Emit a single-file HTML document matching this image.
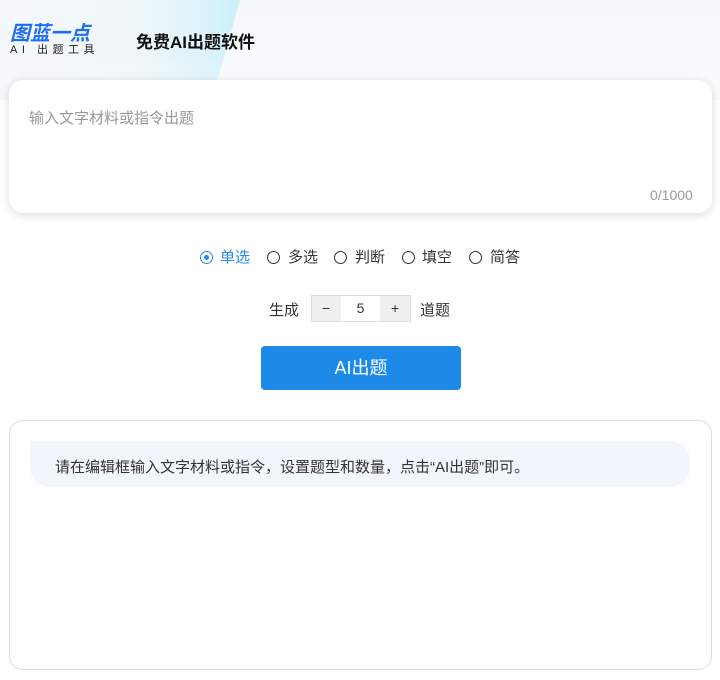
<!DOCTYPE html>
<html><head><meta charset="utf-8"><style>
body{margin:0;width:720px;height:680px;overflow:hidden;background:#fff;font-family:"Liberation Sans","Noto Sans CJK SC",sans-serif;position:relative}
.hdr{position:absolute;left:0;top:0;width:720px;height:100px;background:linear-gradient(180deg,#f6f9fc 0%,#f9fbfd 100%)}
.left{position:absolute;left:0;top:0;width:720px;height:100px;background:linear-gradient(90deg,#f5f8fb 0%,#eff6fa 140px,#dcf3fa 205px,#ccf0f9 238px);clip-path:polygon(0 0,240px 0,212px 100px,0 100px)}
.fade{position:absolute;left:0;top:55px;width:720px;height:45px;background:linear-gradient(180deg,rgba(248,250,252,0),rgba(248,250,252,0.6))}
.abs{position:absolute}
.r{position:absolute;top:251px;width:11px;height:11px;border:1.5px solid #333;border-radius:50%}
.t{position:absolute;top:246px;font-size:15px;color:#333}
</style></head><body>
<div class="hdr"></div><div class="left"></div><div class="fade"></div>
<div class="abs" style="left:10px;top:17px;font-size:20px;font-weight:bold;font-style:italic;color:#1e6ff0">图蓝一点</div>
<div class="abs" style="left:10px;top:41px;font-size:11px;color:#222;letter-spacing:4.5px;white-space:nowrap">AI 出题工具</div>
<div class="abs" style="left:136px;top:28px;font-size:17px;font-weight:bold;color:#111">免费AI出题软件</div>
<div class="abs" style="left:9px;top:80px;width:703px;height:133px;background:#fff;border-radius:14px;box-shadow:0 2px 10px rgba(0,0,0,0.15)"></div>
<div class="abs" style="left:29px;top:107px;font-size:15px;color:#999">输入文字材料或指令出题</div>
<div class="abs" style="left:650px;top:187px;font-size:14px;color:#999">0/1000</div>
<div class="r" style="left:200px;border-color:#2a8ae6"><span style="position:absolute;left:3px;top:3px;width:5px;height:5px;background:#2a8ae6;border-radius:50%"></span></div>
<div class="t" style="left:220px;color:#2a8ae6">单选</div>
<div class="r" style="left:267px"></div><div class="t" style="left:288px">多选</div>
<div class="r" style="left:334px"></div><div class="t" style="left:355px">判断</div>
<div class="r" style="left:402px"></div><div class="t" style="left:422px">填空</div>
<div class="r" style="left:469px"></div><div class="t" style="left:490px">简答</div>
<div class="abs" style="left:269px;top:299px;font-size:15px;color:#333">生成</div>
<div class="abs" style="left:311px;top:295px;width:98px;height:25px;border:1px solid #ddd;background:#f0f0f0;font-size:14px;color:#333">
<span class="abs" style="left:10px;top:4px">−</span>
<span class="abs" style="left:29px;top:0;width:39px;height:25px;background:#fff;text-align:center;line-height:25px">5</span>
<span class="abs" style="left:79px;top:4px">+</span></div>
<div class="abs" style="left:420px;top:299px;font-size:15px;color:#333">道题</div>
<div class="abs" style="left:261px;top:346px;width:200px;height:44px;background:#1e8ae8;border-radius:4px;color:#fff;font-size:18px;text-align:center;line-height:44px">AI出题</div>
<div class="abs" style="left:9px;top:420px;width:701px;height:248px;border:1px solid #ddd;border-radius:14px"></div>
<div class="abs" style="left:30px;top:441px;width:660px;height:46px;background:#f1f5fc;border-radius:0 20px 20px 20px"></div>
<div class="abs" style="left:55px;top:456px;font-size:15px;color:#333;white-space:nowrap">请在编辑框输入文字材料或指令，设置题型和数量，点击“AI出题”即可。</div>
</body></html>
